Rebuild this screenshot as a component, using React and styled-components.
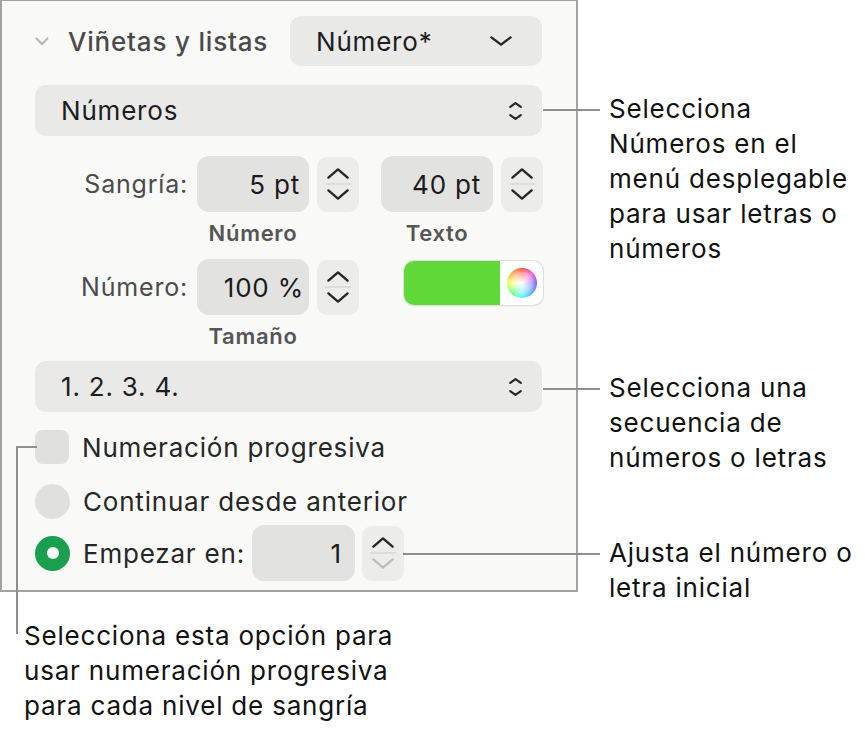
import React from "react";
import styled, { createGlobalStyle } from "styled-components";

const GlobalStyle = createGlobalStyle`
  html, body {
    margin: 0;
    padding: 0;
    background: #ffffff;
  }
  body {
    font-family: Inter, "Noto Sans", "Liberation Sans", sans-serif;
    color: #111;
    -webkit-font-smoothing: antialiased;
  }
`;

const Page = styled.div`
  width: 865px;
  height: 732px;
  display: flex;
  flex-direction: column;
  overflow: hidden;
`;

const Top = styled.div`
  display: flex;
  align-items: flex-start;
`;

const Panel = styled.section`
  box-sizing: border-box;
  width: 578px;
  height: 592px;
  flex: none;
  background: #f9f9f8;
  border: 2px solid #a2a2a2;
  border-top-width: 1px;
  padding: 15px 34px 0 33px;
  display: flex;
  flex-direction: column;
  letter-spacing: 0.8px;
`;

const HeaderRow = styled.div`
  display: flex;
  align-items: center;
  height: 50px;
`;

const Disclosure = styled.svg`
  width: 14px;
  height: 9px;
  margin-right: 19px;
  flex: none;
`;

const SectionTitle = styled.h2`
  margin: 0;
  font-size: 26px;
  font-weight: 500;
  color: #4a4a4a;
  letter-spacing: 0.8px;
  flex: 1;
`;

const PopupButton = styled.div`
  box-sizing: border-box;
  height: ${(p) => p.$h || 50}px;
  width: ${(p) => (p.$w ? `${p.$w}px` : "100%")};
  background: #e9e9e8;
  border-radius: 11px;
  display: flex;
  align-items: center;
  justify-content: space-between;
  padding: 0 ${(p) => p.$pr || 19}px 0 ${(p) => p.$pl || 26}px;
  margin-top: ${(p) => p.$mt || 0}px;
  font-size: 26px;
  color: #1d1d1d;
  flex: none;
`;

const FieldGrid = styled.div`
  display: grid;
  grid-template-columns: 162px 184px 162px;
  margin-top: ${(p) => p.$mt || 0}px;
  align-items: center;
`;

const RowLabel = styled.div`
  font-size: 25px;
  color: #4b4b4b;
  text-align: right;
  padding-right: 9px;
`;

const Pair = styled.div`
  display: flex;
  align-items: center;
  gap: 8px;
`;

const Field = styled.div`
  box-sizing: border-box;
  width: ${(p) => p.$w || 112}px;
  height: 56px;
  background: #e2e2e1;
  border-radius: 12px;
  display: flex;
  align-items: center;
  justify-content: flex-end;
  padding-right: ${(p) => p.$pr || 10}px;
  font-size: 26px;
  color: #1a1a1a;
  flex: none;
`;

const StepperBox = styled.div`
  box-sizing: border-box;
  width: 42px;
  height: 55px;
  border-radius: 10px;
  background: #ececeb;
  display: flex;
  flex-direction: column;
  align-items: center;
  justify-content: center;
  flex: none;
`;

const StepSep = styled.div`
  width: 26px;
  height: 2px;
  background: #dcdcdb;
  margin: 3px 0;
`;

const SubLabel = styled.div`
  grid-column: ${(p) => p.$col};
  width: 112px;
  text-align: center;
  font-size: 22px;
  line-height: 26px;
  font-weight: 600;
  color: #555555;
  letter-spacing: 0.7px;
  padding-top: 8px;
`;

const ColorWell = styled.div`
  box-sizing: border-box;
  margin-left: 23px;
  width: 139px;
  height: 44px;
  border-radius: 10px;
  background: #ffffff;
  box-shadow: 0 0 0 1px #dedede, 0 1px 2px rgba(0, 0, 0, 0.12);
  display: flex;
  overflow: hidden;
  align-self: start;
  margin-top: 2px;
`;

const Swatch = styled.div`
  width: 96px;
  background: ${(p) => p.$color};
`;

const WheelSlot = styled.div`
  flex: 1;
  display: flex;
  align-items: center;
  justify-content: center;
`;

const Wheel = styled.div`
  width: 30px;
  height: 30px;
  border-radius: 50%;
  background: radial-gradient(circle, rgba(255, 255, 255, 1) 0%, rgba(255, 255, 255, 0.55) 45%, rgba(255, 255, 255, 0) 75%),
    conic-gradient(#ff3b30, #ff40c8, #6a4cff, #3fa0ff, #3ff5ff, #5aff6a, #f5ff45, #ffa030, #ff3b30);
`;

const OptionRow = styled.div`
  display: flex;
  align-items: center;
  gap: 13px;
  margin-top: ${(p) => p.$mt || 0}px;
  font-size: 26px;
  color: #262626;
  position: relative;
`;

const CheckBox = styled.div`
  box-sizing: border-box;
  width: 34px;
  height: 34px;
  border-radius: 8px;
  background: #e0e0df;
  flex: none;
  position: relative;

  /* leader that runs from the box down to the note below the panel */
  &::before {
    content: "";
    position: absolute;
    left: -19px;
    top: 16px;
    width: 19px;
    height: 186px;
    border-top: 2px solid #8f8f8f;
    border-left: 2px solid #8f8f8f;
  }
`;

const Radio = styled.div`
  box-sizing: border-box;
  width: 35px;
  height: 35px;
  border-radius: 50%;
  background: ${(p) => (p.$on ? "#1a9f4f" : "#e0e0df")};
  flex: none;
  display: flex;
  align-items: center;
  justify-content: center;

  &::after {
    content: "";
    display: ${(p) => (p.$on ? "block" : "none")};
    width: 12px;
    height: 12px;
    border-radius: 50%;
    background: #ffffff;
  }
`;

const StartField = styled.div`
  display: flex;
  align-items: center;
  gap: 7px;
  margin-left: -6px;
`;

const Notes = styled.div`
  display: flex;
  flex-direction: column;
  padding-left: 31px;
`;

const Note = styled.p`
  margin: ${(p) => p.$mt}px 0 0;
  font-size: 26px;
  line-height: 35px;
  letter-spacing: 0.8px;
  color: #111111;
  position: relative;
  white-space: pre-line;

  &::before {
    content: "";
    position: absolute;
    top: 18px;
    left: ${(p) => -(p.$lead + 9)}px;
    width: ${(p) => p.$lead}px;
    height: 2px;
    background: #8f8f8f;
  }
`;

const BottomNote = styled.p`
  margin: 13px 0 0 24px;
  font-size: 26px;
  line-height: 35px;
  letter-spacing: 0.8px;
  color: #111111;
  white-space: pre-line;
`;

const Chevron = ({ dir = "down", w = 22, h = 12, color = "#222", sw = 2.4 }) => (
  <svg width={w} height={h} viewBox={`0 0 ${w} ${h}`} fill="none" style={{ display: "block" }}>
    <path
      d={
        dir === "down"
          ? `M${sw} ${sw} L${w / 2} ${h - sw} L${w - sw} ${sw}`
          : `M${sw} ${h - sw} L${w / 2} ${sw} L${w - sw} ${h - sw}`
      }
      stroke={color}
      strokeWidth={sw}
      strokeLinecap="round"
      strokeLinejoin="round"
    />
  </svg>
);

const UpDownIcon = styled.span`
  display: flex;
  flex-direction: column;
  gap: 4px;
  align-items: center;
`;

const UpDown = () => (
  <UpDownIcon>
    <Chevron dir="up" w={15} h={8} sw={2.2} color="#262626" />
    <Chevron dir="down" w={15} h={8} sw={2.2} color="#262626" />
  </UpDownIcon>
);

const Stepper = ({ downOff }) => (
  <StepperBox>
    <Chevron dir="up" w={24} h={13} sw={2.4} color="#262626" />
    <StepSep />
    <Chevron dir="down" w={24} h={13} sw={2.4} color={downOff ? "#bdbdbd" : "#262626"} />
  </StepperBox>
);

export default function App() {
  return (
    <>
      <GlobalStyle />
      <Page>
        <Top>
          <Panel>
            <HeaderRow>
              <Disclosure viewBox="0 0 14 9" fill="none">
                <path d="M1.5 1.5 L7 7 L12.5 1.5" stroke="#b4b4b4" strokeWidth="2" strokeLinecap="round" strokeLinejoin="round" />
              </Disclosure>
              <SectionTitle>Viñetas y listas</SectionTitle>
              <PopupButton $w={252} $pr={29}>
                Número*
                <Chevron dir="down" w={24} h={12} sw={2.4} color="#262626" />
              </PopupButton>
            </HeaderRow>

            <PopupButton $mt={19} $h={51}>
              Números
              <UpDown />
            </PopupButton>

            <FieldGrid $mt={20}>
              <RowLabel>Sangría:</RowLabel>
              <Pair>
                <Field $pr={9}>5 pt</Field>
                <Stepper />
              </Pair>
              <Pair>
                <Field $pr={12}>40 pt</Field>
                <Stepper />
              </Pair>
              <SubLabel $col={2}>Número</SubLabel>
              <SubLabel $col={3}>Texto</SubLabel>
            </FieldGrid>

            <FieldGrid $mt={13}>
              <RowLabel>Número:</RowLabel>
              <Pair>
                <Field $pr={5}>100 %</Field>
                <Stepper />
              </Pair>
              <ColorWell>
                <Swatch $color="#5fd838" />
                <WheelSlot>
                  <Wheel />
                </WheelSlot>
              </ColorWell>
              <SubLabel $col={2}>Tamaño</SubLabel>
            </FieldGrid>

            <PopupButton $mt={12} $h={51}>
              1. 2. 3. 4.
              <UpDown />
            </PopupButton>

            <OptionRow $mt={18}>
              <CheckBox />
              Numeración progresiva
            </OptionRow>

            <OptionRow $mt={20}>
              <Radio />
              Continuar desde anterior
            </OptionRow>

            <OptionRow $mt={6}>
              <Radio $on />
              Empezar en:
              <StartField>
                <Field $w={103} $pr={13}>1</Field>
                <Stepper downOff />
              </StartField>
            </OptionRow>
          </Panel>

          <Notes>
            <Note $mt={91} $lead={57}>{"Selecciona\nNúmeros en el\nmenú desplegable\npara usar letras o\nnúmeros"}</Note>
            <Note $mt={104} $lead={57}>{"Selecciona una\nsecuencia de\nnúmeros o letras"}</Note>
            <Note $mt={60} $lead={197}>{"Ajusta el número o\nletra inicial"}</Note>
          </Notes>
        </Top>
        <BottomNote>{"Selecciona esta opción para\nusar numeración progresiva\npara cada nivel de sangría"}</BottomNote>
      </Page>
    </>
  );
}
